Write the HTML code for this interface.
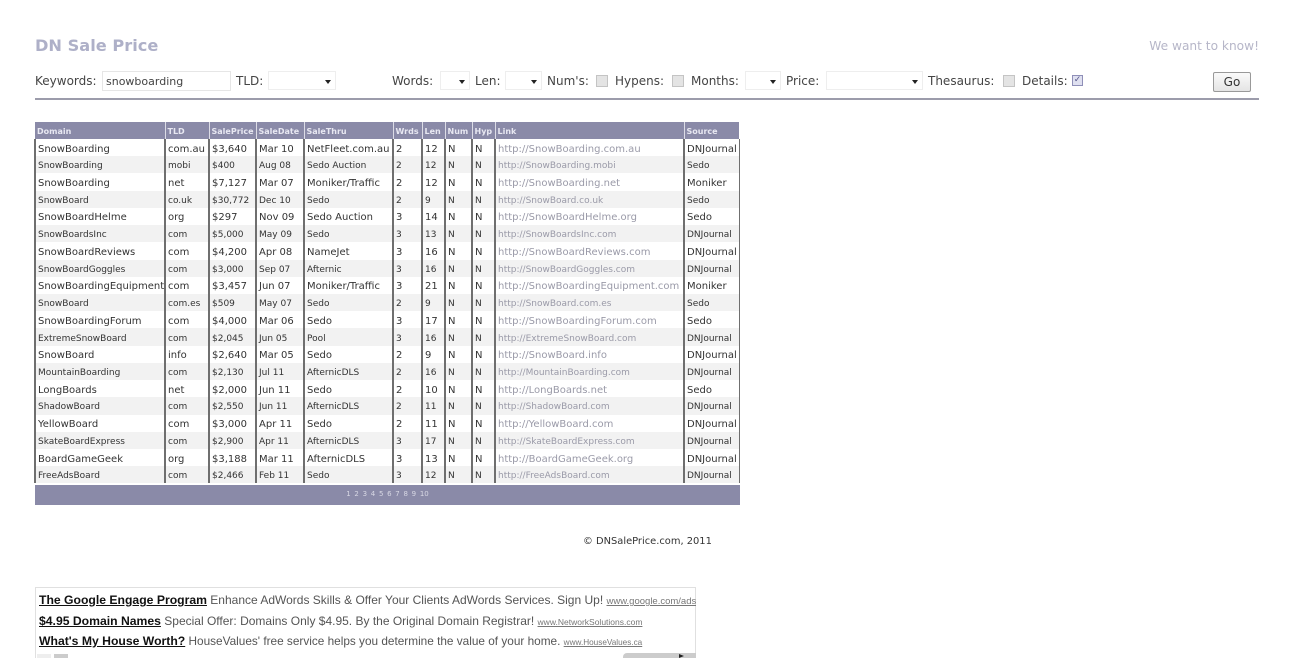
<!DOCTYPE html>
<html lang="en"><head><meta charset="utf-8"><title>DN Sale Price</title>
<style>
html,body{margin:0;padding:0;background:#fff;width:1294px;height:658px;overflow:hidden;position:relative}
body{font-family:"DejaVu Sans","Liberation Sans",sans-serif;color:#333}
.a{position:absolute;white-space:nowrap}
.l{font-size:12px;line-height:14px;top:74px;color:#444}
.s{position:absolute;top:71px;height:19px;background:#fff;border:1px solid #eee;box-sizing:border-box}
.s:after{content:"";position:absolute;right:4px;top:8px;border:3.5px solid transparent;border-top:4px solid #222;border-bottom:0}
.c{position:absolute;top:75px;width:12px;height:12px;box-sizing:border-box;border:1px solid #c4c4c4;background:#e4e4e4}
table{position:absolute;left:34px;top:122px;width:704px;border-collapse:collapse;table-layout:fixed}
th{height:17px;box-sizing:border-box;padding:2px 0 0 2px;background:#8a8aa8;color:#e8e8f2;font-size:8px;font-weight:bold;text-align:left;border-left:1px solid #dcdce6;white-space:nowrap;overflow:hidden}
th:first-child{border-left:0}
td{height:17.22px;padding:3px 0 0 2px;font-size:10px;color:#333;border-left:2px solid #6f6f6f;white-space:nowrap;overflow:hidden;box-sizing:border-box}
td:last-child{border-right:1px solid #6f6f6f}
tr.e td{background:#f2f2f2;font-size:9px}
td.k{color:#9a9aa8}
.ad{position:absolute;left:39px;width:657px;overflow:hidden;font-family:"Liberation Sans",sans-serif;font-size:12px;color:#555;white-space:nowrap}
.ad b{font-size:12.2px;color:#111;text-decoration:underline}
.ad u{font-size:8.5px;color:#777}
</style></head><body>
<div class="a" style="left:35px;top:36px;font-size:16.2px;line-height:20px;font-weight:bold;color:#aeb0c8">DN Sale Price</div>
<div class="a" style="right:35px;top:39px;font-size:12.2px;line-height:14px;color:#b6b6c8">We want to know!</div>

<div class="a l" style="left:35px">Keywords:</div>
<input type="text" value="snowboarding" style="position:absolute;left:102px;top:71px;width:129px;height:20px;box-sizing:border-box;border:1px solid #e6e6e6;padding:0 0 0 3px;margin:0;font:11px 'DejaVu Sans',sans-serif;color:#444;background:#fff">
<div class="a l" style="left:236px">TLD:</div><div class="s" style="left:268px;width:68px"></div>
<div class="a l" style="left:392px">Words:</div><div class="s" style="left:440px;width:30px"></div>
<div class="a l" style="left:475px">Len:</div><div class="s" style="left:505px;width:37px"></div>
<div class="a l" style="left:547px">Num's:</div><div class="c" style="left:596px"></div>
<div class="a l" style="left:615px">Hypens:</div><div class="c" style="left:672px"></div>
<div class="a l" style="left:691px">Months:</div><div class="s" style="left:745px;width:36px"></div>
<div class="a l" style="left:786px">Price:</div><div class="s" style="left:826px;width:97px"></div>
<div class="a l" style="left:928px">Thesaurus:</div><div class="c" style="left:1003px"></div>
<div class="a l" style="left:1022px">Details:</div>
<div class="c" style="left:1072px;top:75px;width:11px;height:11px;border-color:#8f8fb8;background:#dfe0f0;color:#55558a;font-size:9px;line-height:9px;text-align:center">✓</div>
<div class="a" style="left:1213px;top:72px;width:38px;height:20px;box-sizing:border-box;border:1px solid #999;border-radius:2px;background:linear-gradient(#fafafa,#e4e4e4);font-size:12px;line-height:19px;text-align:center;color:#333">Go</div>
<div class="a" style="left:35px;top:98px;width:1224px;height:2px;background:#9c9cab"></div>

<table>
<colgroup><col style="width:130px"><col style="width:44px"><col style="width:47px"><col style="width:48px"><col style="width:89px"><col style="width:29px"><col style="width:23px"><col style="width:27px"><col style="width:23px"><col style="width:189px"><col style="width:55px"></colgroup>
<tr><th>Domain</th><th>TLD</th><th>SalePrice</th><th>SaleDate</th><th>SaleThru</th><th>Wrds</th><th>Len</th><th>Num</th><th>Hyp</th><th>Link</th><th>Source</th></tr>
<tr><td>SnowBoarding</td><td>com.au</td><td>$3,640</td><td>Mar 10</td><td>NetFleet.com.au</td><td>2</td><td>12</td><td>N</td><td>N</td><td class="k">http://SnowBoarding.com.au</td><td>DNJournal</td></tr>
<tr class="e"><td>SnowBoarding</td><td>mobi</td><td>$400</td><td>Aug 08</td><td>Sedo Auction</td><td>2</td><td>12</td><td>N</td><td>N</td><td class="k">http://SnowBoarding.mobi</td><td>Sedo</td></tr>
<tr><td>SnowBoarding</td><td>net</td><td>$7,127</td><td>Mar 07</td><td>Moniker/Traffic</td><td>2</td><td>12</td><td>N</td><td>N</td><td class="k">http://SnowBoarding.net</td><td>Moniker</td></tr>
<tr class="e"><td>SnowBoard</td><td>co.uk</td><td>$30,772</td><td>Dec 10</td><td>Sedo</td><td>2</td><td>9</td><td>N</td><td>N</td><td class="k">http://SnowBoard.co.uk</td><td>Sedo</td></tr>
<tr><td>SnowBoardHelme</td><td>org</td><td>$297</td><td>Nov 09</td><td>Sedo Auction</td><td>3</td><td>14</td><td>N</td><td>N</td><td class="k">http://SnowBoardHelme.org</td><td>Sedo</td></tr>
<tr class="e"><td>SnowBoardsInc</td><td>com</td><td>$5,000</td><td>May 09</td><td>Sedo</td><td>3</td><td>13</td><td>N</td><td>N</td><td class="k">http://SnowBoardsInc.com</td><td>DNJournal</td></tr>
<tr><td>SnowBoardReviews</td><td>com</td><td>$4,200</td><td>Apr 08</td><td>NameJet</td><td>3</td><td>16</td><td>N</td><td>N</td><td class="k">http://SnowBoardReviews.com</td><td>DNJournal</td></tr>
<tr class="e"><td>SnowBoardGoggles</td><td>com</td><td>$3,000</td><td>Sep 07</td><td>Afternic</td><td>3</td><td>16</td><td>N</td><td>N</td><td class="k">http://SnowBoardGoggles.com</td><td>DNJournal</td></tr>
<tr><td>SnowBoardingEquipment</td><td>com</td><td>$3,457</td><td>Jun 07</td><td>Moniker/Traffic</td><td>3</td><td>21</td><td>N</td><td>N</td><td class="k">http://SnowBoardingEquipment.com</td><td>Moniker</td></tr>
<tr class="e"><td>SnowBoard</td><td>com.es</td><td>$509</td><td>May 07</td><td>Sedo</td><td>2</td><td>9</td><td>N</td><td>N</td><td class="k">http://SnowBoard.com.es</td><td>Sedo</td></tr>
<tr><td>SnowBoardingForum</td><td>com</td><td>$4,000</td><td>Mar 06</td><td>Sedo</td><td>3</td><td>17</td><td>N</td><td>N</td><td class="k">http://SnowBoardingForum.com</td><td>Sedo</td></tr>
<tr class="e"><td>ExtremeSnowBoard</td><td>com</td><td>$2,045</td><td>Jun 05</td><td>Pool</td><td>3</td><td>16</td><td>N</td><td>N</td><td class="k">http://ExtremeSnowBoard.com</td><td>DNJournal</td></tr>
<tr><td>SnowBoard</td><td>info</td><td>$2,640</td><td>Mar 05</td><td>Sedo</td><td>2</td><td>9</td><td>N</td><td>N</td><td class="k">http://SnowBoard.info</td><td>DNJournal</td></tr>
<tr class="e"><td>MountainBoarding</td><td>com</td><td>$2,130</td><td>Jul 11</td><td>AfternicDLS</td><td>2</td><td>16</td><td>N</td><td>N</td><td class="k">http://MountainBoarding.com</td><td>DNJournal</td></tr>
<tr><td>LongBoards</td><td>net</td><td>$2,000</td><td>Jun 11</td><td>Sedo</td><td>2</td><td>10</td><td>N</td><td>N</td><td class="k">http://LongBoards.net</td><td>Sedo</td></tr>
<tr class="e"><td>ShadowBoard</td><td>com</td><td>$2,550</td><td>Jun 11</td><td>AfternicDLS</td><td>2</td><td>11</td><td>N</td><td>N</td><td class="k">http://ShadowBoard.com</td><td>DNJournal</td></tr>
<tr><td>YellowBoard</td><td>com</td><td>$3,000</td><td>Apr 11</td><td>Sedo</td><td>2</td><td>11</td><td>N</td><td>N</td><td class="k">http://YellowBoard.com</td><td>DNJournal</td></tr>
<tr class="e"><td>SkateBoardExpress</td><td>com</td><td>$2,900</td><td>Apr 11</td><td>AfternicDLS</td><td>3</td><td>17</td><td>N</td><td>N</td><td class="k">http://SkateBoardExpress.com</td><td>DNJournal</td></tr>
<tr><td>BoardGameGeek</td><td>org</td><td>$3,188</td><td>Mar 11</td><td>AfternicDLS</td><td>3</td><td>13</td><td>N</td><td>N</td><td class="k">http://BoardGameGeek.org</td><td>DNJournal</td></tr>
<tr class="e"><td>FreeAdsBoard</td><td>com</td><td>$2,466</td><td>Feb 11</td><td>Sedo</td><td>3</td><td>12</td><td>N</td><td>N</td><td class="k">http://FreeAdsBoard.com</td><td>DNJournal</td></tr>
</table>
<div class="a" style="left:35px;top:485px;width:705px;height:20px;background:#8a8aa8;color:#d8d8e4;font-size:7px;line-height:19px;text-align:center;word-spacing:1.5px">1 2 3 4 5 6 7 8 9 10</div>
<div class="a" style="left:583px;top:536px;font-size:9.9px;line-height:12px;color:#333">© DNSalePrice.com, 2011</div>

<div class="a" style="left:35px;top:587px;width:661px;height:71px;box-sizing:border-box;border:1px solid #e0e0e0;border-bottom:0"></div>
<div class="ad" style="top:593px"><b>The Google Engage Program</b> Enhance AdWords Skills &amp; Offer Your Clients AdWords Services. Sign Up! <u style="font-size:9.5px">www.google.com/ads</u></div>
<div class="ad" style="top:614px"><b>$4.95 Domain Names</b> Special Offer: Domains Only $4.95. By the Original Domain Registrar! <u>www.NetworkSolutions.com</u></div>
<div class="ad" style="top:634px;font-size:11.8px"><b>What's My House Worth?</b> HouseValues' free service helps you determine the value of your home. <u style="font-size:8.2px">www.HouseValues.ca</u></div>
<div class="a" style="left:37px;top:654px;width:14px;height:4px;background:#eee"></div>
<div class="a" style="left:54px;top:654px;width:14px;height:4px;background:#ccc"></div>
<div class="a" style="left:623px;top:653px;width:73px;height:5px;background:#ccc;border-radius:4px 0 0 0"></div>
<div class="a" style="left:679px;top:654px;border-left:5px solid #222;border-top:2px solid transparent;border-bottom:2px solid transparent"></div>
</body></html>
